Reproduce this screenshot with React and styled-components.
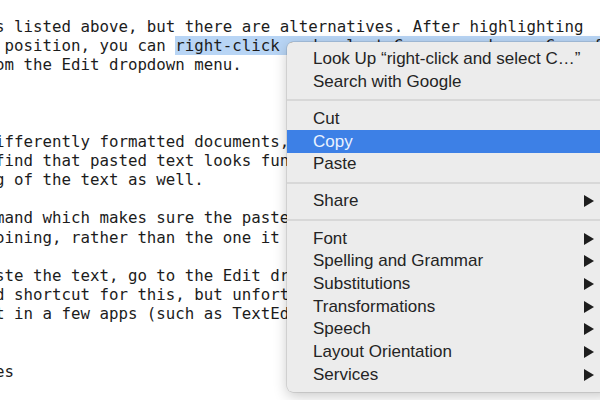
import React from 'react';
import styled, { createGlobalStyle } from 'styled-components';

const GlobalStyle = createGlobalStyle`
  html, body {
    margin: 0;
    padding: 0;
    background: #ffffff;
    overflow: hidden;
  }
`;

// lines of the document behind the menu, each starting at column 0
const docLines = [
  { text: 's listed above, but there are alternatives. After highlighting' },
  { text: ' position, you can ', selected: 'right-click and select Copy, or choose Copy fr' },
  { text: 'om the Edit dropdown menu.' },
  { text: '' },
  { text: '' },
  { text: '' },
  { text: 'ifferently formatted documents, you may sometimes' },
  { text: 'find that pasted text looks funny, with the formattin' },
  { text: 'g of the text as well.' },
  { text: '' },
  { text: 'mand which makes sure the pasted text matches the style' },
  { text: 'oining, rather than the one it was copied from.' },
  { text: '' },
  { text: 'ste the text, go to the Edit dropdown menu and select' },
  { text: 'd shortcut for this, but unfortunately it is not the same' },
  { text: 't in a few apps (such as TextEdit) it works as expected.' },
  { text: '' },
  { text: '' },
  { text: 'es' },
];

const menuGroups = [
  [
    { label: 'Look Up \u201Cright-click and select C\u2026\u201D' },
    { label: 'Search with Google' },
  ],
  [
    { label: 'Cut' },
    { label: 'Copy', active: true },
    { label: 'Paste' },
  ],
  [{ label: 'Share', submenu: true }],
  [
    { label: 'Font', submenu: true },
    { label: 'Spelling and Grammar', submenu: true },
    { label: 'Substitutions', submenu: true },
    { label: 'Transformations', submenu: true },
    { label: 'Speech', submenu: true },
    { label: 'Layout Orientation', submenu: true },
    { label: 'Services', submenu: true },
  ],
];

const App = () => {
  return (
    <Page>
      <GlobalStyle />
      <Document>
        {docLines.map((line, i) => (
          <Line key={i}>
            {line.text}
            {line.selected && <Selection>{line.selected}</Selection>}
          </Line>
        ))}
      </Document>

      <ContextMenu>
        {menuGroups.map((group, gi) => (
          <React.Fragment key={gi}>
            {gi > 0 && <Separator />}
            {group.map(item => (
              <MenuItem key={item.label} $active={item.active}>
                <span>{item.label}</span>
                {item.submenu && <Arrow />}
              </MenuItem>
            ))}
          </React.Fragment>
        ))}
      </ContextMenu>
    </Page>
  );
};

export default App;

// Styled components
const Page = styled.div`
  position: relative;
  width: 600px;
  height: 400px;
  overflow: hidden;
  background: #ffffff;
`;

const Document = styled.div`
  padding-top: 17px;
  margin-left: -5px;
  font-family: "DejaVu Sans Mono", "Liberation Mono", monospace;
  font-size: 15.78px;
  line-height: 19.15px;
  color: #1c1c1c;
  white-space: pre;
`;

const Line = styled.div`
  height: 19.15px;
`;

const Selection = styled.span`
  background: #b8d5f5;
`;

const ContextMenu = styled.div`
  position: absolute;
  left: 287px;
  top: 42px;
  right: -12px;
  padding: 5.6px 0;
  background: #ececec;
  border-radius: 6px;
  box-shadow: 0 0 0 0.5px rgba(0, 0, 0, 0.18), 0 4px 14px rgba(0, 0, 0, 0.22);
`;

const MenuItem = styled.div`
  display: flex;
  align-items: center;
  justify-content: space-between;
  height: 22.7px;
  padding: 0 18px 0 26px;
  font-family: "Liberation Sans", Arial, sans-serif;
  font-size: 17px;
  color: ${p => (p.$active ? '#eaf2ff' : '#242424')};
  background: ${p => (p.$active ? '#3d80e6' : 'transparent')};
  white-space: nowrap;
`;

const Arrow = styled.span`
  width: 0;
  height: 0;
  border-top: 6px solid transparent;
  border-bottom: 6px solid transparent;
  border-left: 10px solid #1e1e1e;
`;

const Separator = styled.div`
  display: flex;
  align-items: center;
  height: 14.5px;

  &::after {
    content: '';
    flex: 1;
    height: 2px;
    background: #d8d8d8;
  }
`;
